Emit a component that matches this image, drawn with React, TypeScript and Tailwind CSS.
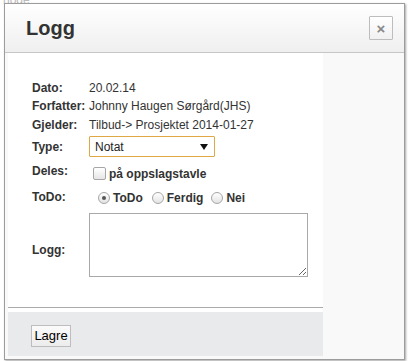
import React from "react";

function Checkbox() {
  return (
    <span className="inline-block w-[13px] h-[13px] rounded-[2px] border border-[#a6a6a6] bg-gradient-to-b from-white to-[#e6e6e6] shrink-0" />
  );
}

function Radio({ checked }: { checked?: boolean }) {
  return (
    <span className="inline-flex w-[12px] h-[12px] rounded-full border border-[#a6a6a6] bg-gradient-to-b from-white to-[#e3e3e3] items-center justify-center shrink-0">
      {checked && <span className="block w-[4px] h-[4px] rounded-full bg-[#555]" />}
    </span>
  );
}

export default function App() {
  return (
    <div className="relative w-[408px] h-[361px] bg-white overflow-hidden font-['Liberation_Sans',Arial,sans-serif] text-[#333]">
      <div className="absolute left-[3px] top-[-9px] text-[12px] text-[#bbb]">noge</div>
      <div className="pt-[3px] pl-[4px]">
        <div className="relative w-[401px] h-[357px] border border-[#9c9c9c] bg-[#f9f9f9] shadow-[1px_1px_2px_rgba(0,0,0,0.35)] flex flex-col">
          {/* header */}
          <div className="h-[49px] border-b border-[#c6c6c6] bg-gradient-to-b from-white to-[#efefef] flex items-center justify-between pl-[21px] pr-[11px] shrink-0">
            <span className="text-[20px] font-bold leading-none text-[#333]">Logg</span>
            <span className="w-[24px] h-[24px] border border-[#bdbdbd] rounded-[1px] bg-gradient-to-b from-white to-[#f1f1f1] flex items-center justify-center text-[#888] text-[15px] font-bold leading-none">
              ×
            </span>
          </div>
          {/* body */}
          <div className="flex flex-1">
            <div className="w-[3px] shrink-0" />
            <div className="w-[315px] shrink-0 flex flex-col">
              <div className="h-[254px] bg-white pl-[24px] pt-[26px] text-[12px]">
                <div className="flex h-[18px] leading-[18px]">
                  <span className="w-[57px] font-bold">Dato:</span>
                  <span>20.02.14</span>
                </div>
                <div className="flex h-[18px] leading-[18px]">
                  <span className="w-[57px] font-bold">Forfatter:</span>
                  <span>Johnny Haugen Sørgård(JHS)</span>
                </div>
                <div className="flex h-[19px] leading-[20px]">
                  <span className="w-[57px] font-bold">Gjelder:</span>
                  <span>Tilbud-&gt; Prosjektet 2014-01-27</span>
                </div>
                <div className="flex items-center h-[21px] mt-[2px]">
                  <span className="w-[57px] font-bold leading-[16px]">Type:</span>
                  <div className="w-[126px] h-[21px] border border-[#e0a845] rounded-[1px] bg-white flex items-center justify-between pl-[5px] pr-[6px]">
                    <span className="leading-[16px] text-[#222]">Notat</span>
                    <svg width="8" height="6" viewBox="0 0 8 6">
                      <polygon points="0,0 8,0 4,6" fill="#111" />
                    </svg>
                  </div>
                </div>
                <div className="flex items-start h-[16px] mt-[6px]">
                  <span className="w-[57px] font-bold leading-[16px]">Deles:</span>
                  <span className="mt-[4px] ml-[4px] flex">
                    <Checkbox />
                  </span>
                  <span className="ml-[3px] mt-[3px] font-bold leading-[16px]">på oppslagstavle</span>
                </div>
                <div className="flex items-start h-[16px] mt-[10px]">
                  <span className="w-[57px] font-bold leading-[16px]">ToDo:</span>
                  <span className="mt-[3px] ml-[9px] flex">
                    <Radio checked />
                  </span>
                  <span className="ml-[3px] mt-[1px] font-bold leading-[16px]">ToDo</span>
                  <span className="mt-[3px] ml-[9px] flex">
                    <Radio />
                  </span>
                  <span className="ml-[3px] mt-[1px] font-bold leading-[16px]">Ferdig</span>
                  <span className="mt-[3px] ml-[8px] flex">
                    <Radio />
                  </span>
                  <span className="ml-[3px] mt-[1px] font-bold leading-[16px]">Nei</span>
                </div>
                <div className="flex items-start mt-[8px]">
                  <span className="w-[57px] font-bold leading-[16px] mt-[29px]">Logg:</span>
                  <textarea className="w-[219px] h-[64px] border border-[#a9a9a9] bg-white outline-none block" />
                </div>
              </div>
              <div className="h-[1px] bg-[#aaaaaa]" />
              <div className="h-[4px] bg-white" />
              <div className="h-[44px] bg-[#e9eaeb] pl-[23px] pt-[11px]">
                <span className="inline-flex items-center justify-center w-[40px] h-[22px] border border-[#bdbdbd] bg-gradient-to-b from-[#fbfbfb] to-[#ececec] text-[13px] text-black leading-none">
                  Lagre
                </span>
              </div>
            </div>
            <div className="flex-1" />
          </div>
        </div>
      </div>
    </div>
  );
}
